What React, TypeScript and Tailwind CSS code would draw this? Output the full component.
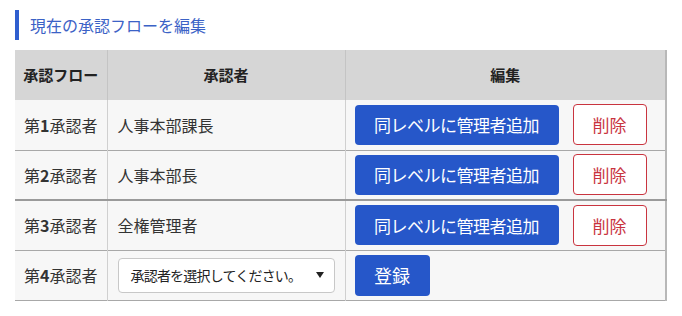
const rows = [
  { no: 1, name: "人事本部課長" },
  { no: 2, name: "人事本部長" },
  { no: 3, name: "全権管理者" },
];

export default function App() {
  return (
    <div
      className="min-h-[316px] bg-white pl-[15px] pt-[10px] text-[#333]"
      style={{ fontFamily: '"Noto Sans CJK JP", "Noto Sans", sans-serif' }}
    >
      <h2 className="flex h-[30px] items-center border-l-[4px] border-[#2f5fcf] pl-[11px] text-[16px] font-normal text-[#3b62c6]">
        現在の承認フローを編集
      </h2>
      <table className="mt-[10px] w-[651px] table-fixed border-collapse border-r-2 border-r-[#b8b8b8]">
        <colgroup>
          <col className="w-[92px]" />
          <col className="w-[238px]" />
          <col className="w-[321px]" />
        </colgroup>
        <thead>
          <tr className="h-[50px] bg-[#d6d6d6] text-[15px] font-bold text-[#222]">
            <th className="border-r border-[#c4c4c4] text-center">承認フロー</th>
            <th className="border-r border-[#c4c4c4] text-center">承認者</th>
            <th className="text-center">編集</th>
          </tr>
        </thead>
        <tbody className="bg-[#f7f7f7] text-[16px]">
          {rows.map((r) => (
            <tr
              key={r.no}
              className={
                r.no === 2
                  ? "h-[50px] border-b-2 border-[#9a9a9a]"
                  : "h-[50px] border-b border-[#a8a8a8]"
              }
            >
              <td className="border-r border-[#d0d0d0] pl-[9px]">
                第<b>{r.no}</b>承認者
              </td>
              <td className="border-r border-[#d0d0d0] pl-[10px]">{r.name}</td>
              <td className="pl-[9px]">
                <div className="flex items-center gap-[14px]">
                  <button className="h-[40px] w-[204px] rounded-[4px] bg-[#2657c9] text-[17px] tracking-[-0.5px] text-white">
                    同レベルに管理者追加
                  </button>
                  <button className="h-[41px] w-[74px] rounded-[4px] border border-[#c9343f] bg-white text-[17px] text-[#c9343f]">
                    削除
                  </button>
                </div>
              </td>
            </tr>
          ))}
          <tr className="h-[50px] border-b border-[#a8a8a8]">
            <td className="border-r border-[#d0d0d0] pl-[9px]">
              第<b>4</b>承認者
            </td>
            <td className="border-r border-[#d0d0d0] pl-[10px]">
              <div className="flex h-[35px] w-[217px] items-center justify-between rounded-[4px] border border-[#c8c8c8] bg-white pl-[12px] pr-[10px]">
                <span className="text-[14px] tracking-[-0.8px] text-[#222]">承認者を選択してください。</span>
                <span className="h-0 w-0 border-x-[4px] border-t-[6px] border-x-transparent border-t-[#222]" />
              </div>
            </td>
            <td className="pl-[9px]">
              <button className="h-[41px] w-[75px] rounded-[4px] bg-[#2657c9] text-[18px] text-white">
                登録
              </button>
            </td>
          </tr>
        </tbody>
      </table>
    </div>
  );
}
